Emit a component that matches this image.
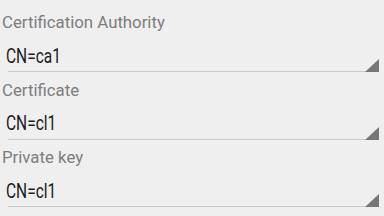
const fields = [
  { label: "Certification Authority", value: "CN=ca1" },
  { label: "Certificate", value: "CN=cl1" },
  { label: "Private key", value: "CN=cl1" },
];

function SpinnerField({ label, value }: { label: string; value: string }) {
  return (
    <div className="pt-[6.5px]">
      <div className="pl-[2px] text-[16.8px] leading-[22px] text-[#7d7d7d]">
        {label}
      </div>
      <div className="relative mt-[11px]">
        <div className="h-[27px] pl-[6px] pt-[5.5px]">
          {/* spinner text is narrow and tall in the original */}
          <span className="block h-[16px] text-[15.5px] leading-[16px] text-[#1c1c1c] origin-[0_13.5px] scale-y-[1.3]">
            {value}
          </span>
        </div>
        <div className="ml-[8px] mr-[5px] h-[1px] bg-[#c9c9c9]" />
        <svg
          className="absolute right-[5px] bottom-0"
          width="14"
          height="13"
          viewBox="0 0 14 13"
        >
          <polygon points="14,0 14,13 0,13" fill="#767676" />
        </svg>
      </div>
    </div>
  );
}

export default function App() {
  return (
    <div
      className="w-[384px] h-[216px] overflow-hidden bg-[#efefef] pt-[4.5px]"
      style={{ fontFamily: "Roboto, 'Liberation Sans', sans-serif" }}
    >
      {fields.map((f) => (
        <SpinnerField key={f.label} label={f.label} value={f.value} />
      ))}
    </div>
  );
}
